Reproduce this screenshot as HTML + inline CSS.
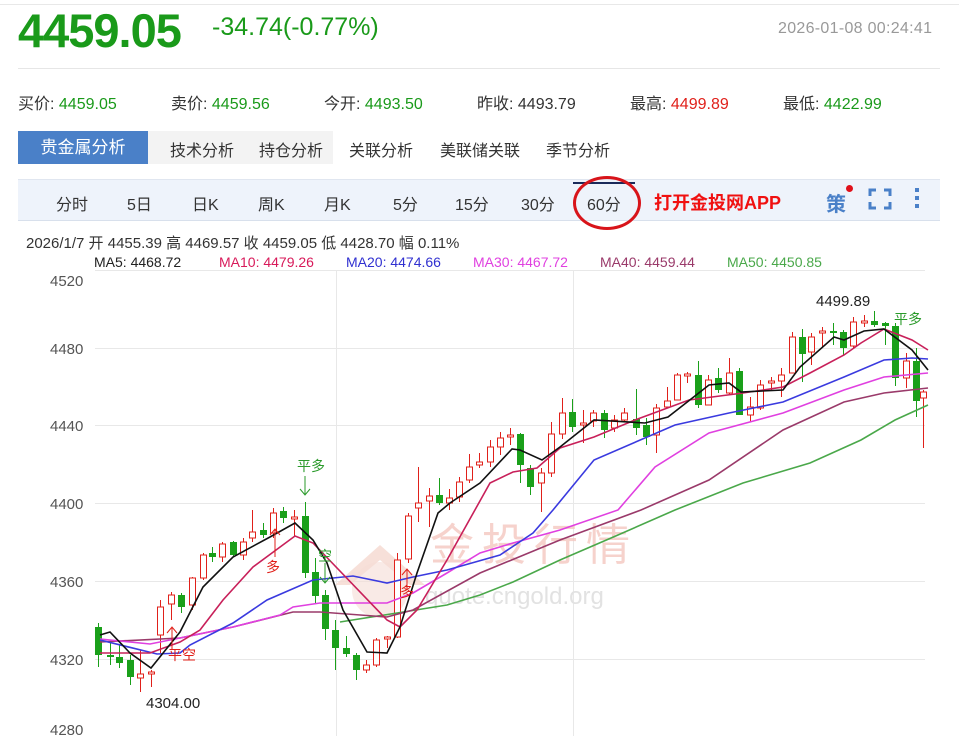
<!DOCTYPE html>
<html><head><meta charset="utf-8"><style>
*{margin:0;padding:0;box-sizing:border-box}
body{width:959px;height:736px;overflow:hidden;background:#fff;font-family:"Liberation Sans","Noto Sans CJK SC",sans-serif;position:relative;color:#333}
.a{position:absolute;white-space:nowrap}
.g{color:#1a9a1a}.r{color:#e0201a}
</style></head><body>
<div class="a" style="left:0;top:4px;width:959px;height:1px;background:#e8e8e8"></div>
<div class="a g" style="left:18px;top:3px;font-size:47px;font-weight:bold;letter-spacing:-1px">4459.05</div>
<div class="a g" style="left:212px;top:13px;font-size:25px">-34.74(-0.77%)</div>
<div class="a" style="left:778px;top:20px;font-size:16px;color:#999;letter-spacing:0.3px">2026-01-08 00:24:41</div>
<div class="a" style="left:18px;top:68px;width:922px;height:1px;background:#e6e6e6"></div>
<div class="a" style="left:18px;top:90px;font-size:16px;color:#333">买价: <span class="g">4459.05</span></div>
<div class="a" style="left:171px;top:90px;font-size:16px">卖价: <span class="g">4459.56</span></div>
<div class="a" style="left:324px;top:90px;font-size:16px">今开: <span class="g">4493.50</span></div>
<div class="a" style="left:477px;top:90px;font-size:16px">昨收: 4493.79</div>
<div class="a" style="left:630px;top:90px;font-size:16px">最高: <span class="r">4499.89</span></div>
<div class="a" style="left:783px;top:90px;font-size:16px">最低: <span class="g">4422.99</span></div>
<div class="a" style="left:148px;top:131px;width:185px;height:33px;background:#f3f3f3"></div>
<div class="a" style="left:18px;top:131px;width:130px;height:33px;background:#4a80c8;color:#fff;font-size:17px;line-height:33px;text-align:center">贵金属分析</div>
<div class="a" style="left:170px;top:137px;font-size:16px">技术分析</div>
<div class="a" style="left:259px;top:137px;font-size:16px">持仓分析</div>
<div class="a" style="left:349px;top:137px;font-size:16px">关联分析</div>
<div class="a" style="left:440px;top:137px;font-size:16px">美联储关联</div>
<div class="a" style="left:546px;top:137px;font-size:16px">季节分析</div>
<div class="a" style="left:18px;top:179px;width:922px;height:42px;background:#eef3fb;border-top:1px solid #e0e6f0;border-bottom:1px solid #d8e0ec"></div>
<div class="a" style="left:573px;top:182px;width:62px;height:2px;background:#1a2a5a"></div>
<div class="a" style="font-size:16px;top:191px;left:56px">分时</div>
<div class="a" style="font-size:16px;top:191px;left:127px">5日</div>
<div class="a" style="font-size:16px;top:191px;left:192px">日K</div>
<div class="a" style="font-size:16px;top:191px;left:258px">周K</div>
<div class="a" style="font-size:16px;top:191px;left:324px">月K</div>
<div class="a" style="font-size:16px;top:191px;left:393px">5分</div>
<div class="a" style="font-size:16px;top:191px;left:455px">15分</div>
<div class="a" style="font-size:16px;top:191px;left:521px">30分</div>
<div class="a" style="font-size:16px;top:191px;left:587px">60分</div>
<div class="a" style="left:573px;top:176px;width:68px;height:54px;border:3px solid #d8141a;border-radius:50%"></div>
<div class="a" style="left:654px;top:189px;font-size:18px;font-weight:bold;color:#f01010">打开金投网APP</div>
<div class="a" style="left:826px;top:188px;font-size:20px;font-weight:bold;color:#4a80c8">策</div>
<div class="a" style="left:846px;top:185px;width:7px;height:7px;border-radius:50%;background:#e0101a"></div>
<svg class="a" style="left:868px;top:188px" width="24" height="22"><path d="M2 8V2H8M16 2H22V8M22 14V20H16M8 20H2V14" stroke="#4a80c8" stroke-width="3" fill="none"/></svg>
<div class="a" style="left:915px;top:188px;width:4px;height:4px;background:#4a80c8;box-shadow:0 8px 0 #4a80c8,0 16px 0 #4a80c8"></div>
<div class="a" style="left:26px;top:232px;font-size:15px;color:#333">2026/1/7 开 4455.39 高 4469.57 收 4459.05 低 4428.70 幅 0.11%</div>
<div class="a" style="top:254px;font-size:14px;left:94px;color:#222">MA5: 4468.72</div>
<div class="a" style="top:254px;font-size:14px;left:219px;color:#d81a5a">MA10: 4479.26</div>
<div class="a" style="top:254px;font-size:14px;left:346px;color:#3030d0">MA20: 4474.66</div>
<div class="a" style="top:254px;font-size:14px;left:473px;color:#e040e0">MA30: 4467.72</div>
<div class="a" style="top:254px;font-size:14px;left:600px;color:#9a3a6a">MA40: 4459.44</div>
<div class="a" style="top:254px;font-size:14px;left:727px;color:#4aa84a">MA50: 4450.85</div>
<svg id="c" class="a" style="left:0;top:0" width="959" height="736">
<g stroke="#e8e8e8" stroke-width="1">
<line x1="95" y1="270.5" x2="925" y2="270.5"/><line x1="95" y1="348.5" x2="925" y2="348.5"/><line x1="95" y1="425.5" x2="925" y2="425.5"/><line x1="95" y1="503.5" x2="925" y2="503.5"/><line x1="95" y1="581.5" x2="925" y2="581.5"/><line x1="95" y1="659.5" x2="925" y2="659.5"/>
<line x1="336.5" y1="270" x2="336.5" y2="736"/><line x1="573.5" y1="270" x2="573.5" y2="736"/>
</g>
<g font-size="15" fill="#555" font-family="Liberation Sans">
<text x="50" y="286">4520</text><text x="50" y="354">4480</text><text x="50" y="431">4440</text><text x="50" y="509">4400</text><text x="50" y="587">4360</text><text x="50" y="665">4320</text><text x="50" y="735">4280</text>
</g>
<path d="M335 585 L380 545 L425 585 L410 585 L380 560 L350 585Z" fill="#f5d8d0" opacity=".8"/>
<circle cx="380" cy="590" r="28" fill="#f5dcd5" opacity=".6"/>
<text x="430" y="560" font-size="44" fill="#f3c4bc" opacity=".75" font-family="Noto Sans CJK SC" letter-spacing="8">金投行情</text>
<text x="425" y="604" font-size="24" fill="#e2e2e2" font-family="Liberation Sans">quote.cngold.org</text>
<g id="k"></g>
<g fill="none" stroke-width="1.6">
<polyline stroke="#4aa84a" points="340,622 397,613 447,605 480,595 513,582 560,560 618,535 675,510 743,483 810,463 861,440 895,420 928,405"/>
<polyline stroke="#9a3a6a" points="100,642 180,638 233,627 293,612 320,612 387,617 413,610 480,573 560,540 641,510 709,480 783,430 844,402 884,393 928,388"/>
<polyline stroke="#e040e0" points="100,639 150,644 180,638 233,627 280,615 293,607 320,603 387,603 413,593 447,573 480,553 513,543 560,530 618,510 655,467 709,433 783,413 844,390 884,377 928,373"/>
<polyline stroke="#3a3adf" points="100,640 157,654 180,653 190,645 233,623 267,600 313,580 353,576 387,583 413,577 447,570 500,555 533,533 553,510 594,460 675,425 729,413 783,402 844,377 884,360 912,358 928,359"/>
<polyline stroke="#c8205a" points="100,653 150,653 180,642 200,630 223,600 253,567 295,536 313,543 387,620 400,627 417,610 447,560 490,483 513,472 537,468 560,448 594,437 635,420 689,400 743,393 783,387 810,373 844,355 861,343 884,329 912,340 928,350"/>
<polyline stroke="#111" points="100,635 110,632 130,653 151,668 180,632 203,587 233,557 270,537 295,523 313,540 327,563 343,610 367,652 387,653 400,627 417,573 438,513 450,503 480,483 512,449 520,450 542,460 560,447 594,420 645,423 668,417 709,385 729,383 741,392 783,390 800,367 834,337 844,340 864,331 884,329 912,350 928,370"/>
</g>
<g font-size="14" font-family="Noto Sans CJK SC">
<text x="297" y="471" fill="#2a9a2a">平多</text><path d="M305 476V494M300 489L305 495L310 489" stroke="#2a9a2a" fill="none"/>
<text x="894" y="324" fill="#2a9a2a">平多</text>
<text x="266" y="572" fill="#e0201a">多</text><path d="M275 557V530M270 535L275 529L280 535" stroke="#e0201a" fill="none"/>
<text x="168" y="660" fill="#e0201a">平空</text><path d="M172 650V628M167 633L172 627L177 633" stroke="#e0201a" fill="none"/>
<text x="318" y="561" fill="#2a9a2a">空</text><path d="M325 563V582M320 577L325 583L330 577" stroke="#2a9a2a" fill="none"/>
<text x="400" y="597" fill="#e0201a">多</text><path d="M407 590V570M402 575L407 569L412 575" stroke="#e0201a" fill="none"/>
</g>
<text x="146" y="708" font-size="15" fill="#222" font-family="Liberation Sans">4304.00</text>
<text x="816" y="306" font-size="15" fill="#222" font-family="Liberation Sans">4499.89</text>
</svg>
<script>
var d=[[98,'g',627,655,623,667],[110,'g',655,657,643,665],[119,'g',657,663,645,668],[130,'g',660,677,655,685],[140,'r',674,678,650,692],[151,'r',672,674,670,687],[160,'r',607,635,600,653],[171,'r',595,604,592,620],[181,'g',595,607,593,613],[192,'r',578,605,577,610],[203,'r',555,578,553,580],[212,'g',553,557,547,562],[222,'r',544,557,542,562],[233,'g',542,555,541,557],[243,'r',542,555,538,560],[252,'r',532,538,510,542],[263,'g',530,535,523,538],[273,'r',513,533,508,538],[283,'g',511,518,507,523],[294,'r',517,519,510,537],[305,'g',516,573,502,578],[315,'g',572,596,558,603],[325,'g',595,629,590,640],[335,'g',630,648,620,670],[346,'g',648,654,636,657],[356,'g',655,670,653,680],[366,'r',665,670,660,673],[376,'r',640,665,638,667],[387,'r',637,638,636,648],[397,'r',560,637,553,638],[408,'r',516,559,513,563],[418,'r',503,508,467,522],[429,'r',496,501,488,527],[439,'g',495,503,478,505],[449,'r',498,503,489,510],[459,'r',482,497,477,502],[469,'r',467,480,454,483],[479,'r',462,465,453,468],[490,'r',447,462,440,467],[500,'r',438,447,432,455],[510,'r',435,437,428,445],[520,'g',434,465,433,483],[530,'g',468,487,465,495],[541,'r',473,483,468,512],[551,'r',434,473,422,477],[562,'r',413,434,398,439],[572,'g',412,427,399,432],[583,'r',423,425,410,443],[593,'r',413,421,410,427],[604,'g',413,430,410,438],[614,'r',420,428,415,432],[624,'r',413,420,408,422],[636,'g',419,428,389,435],[646,'g',425,437,418,445],[656,'r',408,435,404,453],[667,'r',401,407,387,408],[677,'r',375,400,373,400],[687,'r',374,376,372,383],[698,'g',375,405,361,408],[708,'r',380,405,375,405],[718,'g',378,390,368,393],[729,'r',373,393,358,395],[739,'g',371,415,368,415],[750,'r',407,415,397,422],[760,'r',385,408,380,410],[771,'r',381,383,377,390],[781,'r',375,381,368,397],[792,'r',337,373,332,373],[802,'g',337,354,329,382],[811,'r',337,352,333,365],[822,'r',331,332,327,347],[833,'g',331,333,323,345],[843,'g',332,348,330,355],[853,'r',322,346,317,348],[864,'r',321,322,315,327],[874,'g',321,325,311,327],[885,'g',323,326,322,345],[895,'g',326,378,323,386],[906,'r',361,378,353,388],[916,'g',361,401,348,417],[923,'r',392,398,390,448]];
var s='';d.forEach(function(c){var x=c[0],col=c[1]=='g'?'#1aa01a':'#e0201a',t=c[2],b=c[3],h=b-t;if(h<2){h=2}
s+='<line x1="'+(x+.5)+'" x2="'+(x+.5)+'" y1="'+c[4]+'" y2="'+c[5]+'" stroke="'+col+'"/>';
if(c[1]=='g')s+='<rect x="'+(x-3)+'" y="'+t+'" width="7" height="'+h+'" fill="'+col+'"/>';
else s+='<rect x="'+(x-2.5)+'" y="'+t+'" width="6" height="'+h+'" fill="#fff" stroke="'+col+'"/>';});
document.getElementById('k').innerHTML=s;
</script>
</body></html>
